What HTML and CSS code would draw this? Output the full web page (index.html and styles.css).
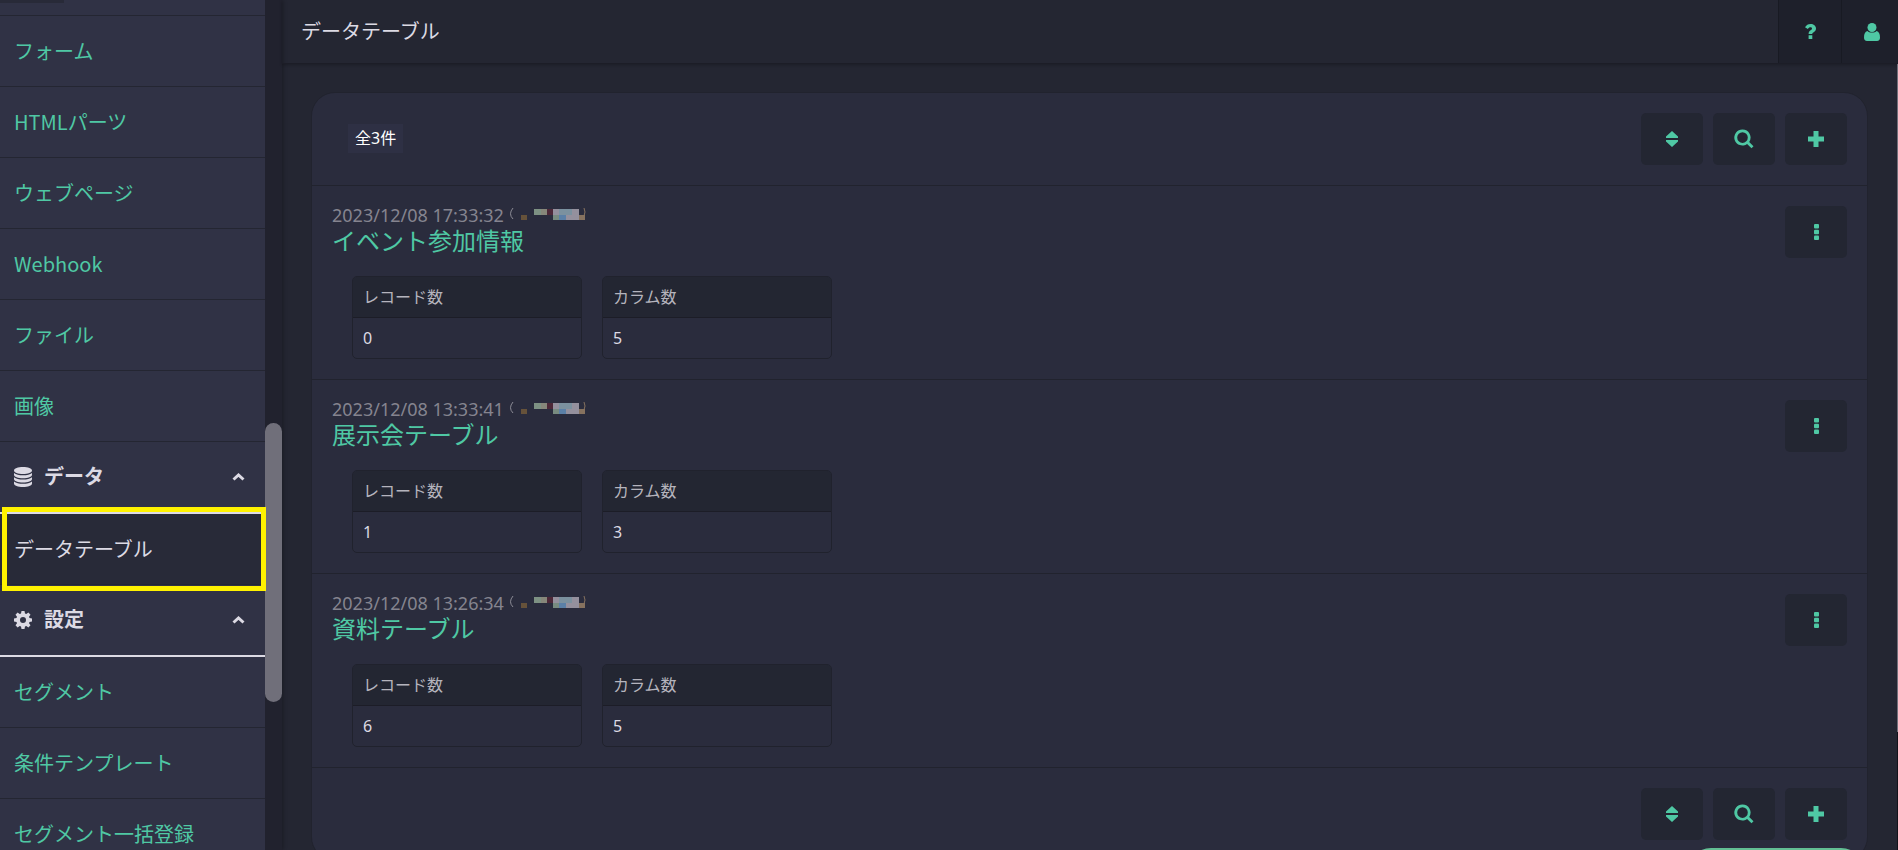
FILE: index.html
```html
<!DOCTYPE html>
<html lang="ja">
<head>
  <meta charset="UTF-8">
  <title>データテーブル</title>
  <link rel="stylesheet" href="styles.css">
</head>
<body>
  <svg class="sprite" aria-hidden="true">
    <symbol id="i-sort" viewBox="0 0 12 16"><path d="M6 0L12 5.500V7H0V5.500zM0 9H12V10.500L6 16L0 10.500z"/></symbol>
    <symbol id="i-search" viewBox="0 0 20 20"><path fill-rule="evenodd" d="M8.500 0.500a8 8 0 0 1 6.700 12.400l4.300 4.300-2 2-4.400-4.300A8 8 0 1 1 8.500 0.500zM8.500 3.300a5.300 5.300 0 1 0 0 10.600 5.300 5.300 0 0 0 0-10.600z"/></symbol>
    <symbol id="i-plus" viewBox="0 0 16 16"><path d="M5.500 0h5v5.500H16v5h-5.500V16h-5v-5.500H0v-5h5.500z"/></symbol>
    <symbol id="i-dots" viewBox="0 0 5 16"><rect width="5" height="4.500" rx="1"/><rect y="5.800" width="5" height="4.400" rx="1"/><rect y="11.500" width="5" height="4.500" rx="1"/></symbol>
    <symbol id="i-up" viewBox="0 0 13 8"><path d="M1.500 6.500L6.500 2L11.500 6.500" fill="none" stroke="currentColor" stroke-width="3"/></symbol>
    <symbol id="i-mask" viewBox="0 0 78 16">
      <path d="M5 2q-5 6 0 11" fill="none" stroke="#8b8b95"/>
      <path fill="#66523a" d="M13 9h6v5h-6z"/>
      <path fill="#7d9183" d="M26 3h7v6h-7z"/>
      <path fill="#86877a" d="M33 3h6v6h-6z"/>
      <path fill="#4c2838" d="M39 3h6v6h-6z"/>
      <path fill="#94909d" d="M45 3h26v11h-26z"/>
      <path fill="#7b919f" d="M51 3h13v6h-13z"/>
      <path fill="#788b80" d="M45 9h6v5h-6z"/>
      <path fill="#5b80a7" d="M51 9h7v5h-7z"/>
      <path fill="#86725f" d="M71 9h6v5h-6z"/>
      <path d="M76 2q2 4 0 8" fill="none" stroke="#86725f"/>
    </symbol>
  </svg>

  <aside class="sidebar">
    <nav class="menu">
      <div class="menu-cut"><span></span></div>
      <a class="menu-item" href="#">フォーム</a>
      <a class="menu-item" href="#">HTMLパーツ</a>
      <a class="menu-item" href="#">ウェブページ</a>
      <a class="menu-item" href="#">Webhook</a>
      <a class="menu-item" href="#">ファイル</a>
      <a class="menu-item" href="#">画像</a>
      <button class="menu-head" type="button">
        <svg class="head-icon" viewBox="0 0 18 20"><path d="M0 3.500C0 1.500 4 0 9 0s9 1.500 9 3.500S14 7 9 7 0 5.500 0 3.500zM0 6c2 1.600 5 2.300 9 2.300S16 7.600 18 6v1.800c0 2-4 3.500-9 3.500S0 9.800 0 7.800zM0 10.300c2 1.600 5 2.300 9 2.300s7-.7 9-2.300V12c0 2-4 3.500-9 3.500S0 14 0 12zM0 14.500c2 1.600 5 2.300 9 2.300s7-.7 9-2.300v2C18 18.500 14 20 9 20s-9-1.500-9-3.500z"/></svg>
        <span>データ</span>
        <svg class="arrow"><use href="#i-up"/></svg>
      </button>
      <div class="marked"><a class="menu-item active" href="#">データテーブル</a></div>
      <button class="menu-head" type="button">
        <svg class="head-icon" viewBox="0 0 18 20"><path fill-rule="evenodd" d="M7.500 1h3l.5 2.600 1.300.5 2.100-1.500 2.100 2.100L15 6.800l.5 1.300 2.500.4v3l-2.500.4-.5 1.300 1.500 2.100-2.100 2.100-2.100-1.500-1.300.5-.5 2.600h-3L7 16.400l-1.300-.5-2.100 1.500-2.100-2.100L3 13.200l-.5-1.300L0 11.500v-3l2.500-.4L3 6.800 1.500 4.700l2.100-2.100 2.100 1.500L7 3.600zM9 7a3 3 0 1 0 0 6 3 3 0 0 0 0-6z"/></svg>
        <span>設定</span>
        <svg class="arrow"><use href="#i-up"/></svg>
      </button>
      <a class="menu-item" href="#">セグメント</a>
      <a class="menu-item" href="#">条件テンプレート</a>
      <a class="menu-item" href="#">セグメント一括登録</a>
    </nav>
    <div class="track"><div class="thumb"></div></div>
  </aside>

  <div class="page">
    <header class="topbar">
      <h1>データテーブル</h1>
      <button class="top-btn" type="button" aria-label="ヘルプ"><svg width="11" height="15" viewBox="0 0 11 15"><path d="M0 3.300C1.300 1.200 3 0 5.600 0 8.600 0 11 1.900 11 4.500c0 2-1 2.900-2.300 3.700C7.500 8.900 7.300 9.200 7.300 10H3.600c0-2 .6-2.900 2-3.700C6.700 5.700 7 5.300 7 4.600c0-.8-.7-1.300-1.600-1.300-1.100 0-1.700.5-2.600 1.700zM3.600 11.200h3.700V15H3.600z"/></svg></button>
      <button class="top-btn" type="button" aria-label="アカウント"><svg width="16" height="18" viewBox="0 0 16 18"><circle cx="8" cy="4.500" r="4.500"/><path d="M3.500 8C5 10 11 10 12.500 8 15 8.500 16 11 16 14.500c0 2-1 3.500-3 3.500H3c-2 0-3-1.500-3-3.500C0 11 1 8.500 3.500 8z"/></svg></button>
    </header>

    <div class="content">
      <main class="card">
        <div class="card-head">
          <span class="count">全3件</span>
          <div class="tools">
            <button class="btn" type="button" aria-label="並び替え"><svg width="12" height="16"><use href="#i-sort"/></svg></button>
            <button class="btn" type="button" aria-label="検索"><svg width="20" height="20"><use href="#i-search"/></svg></button>
            <button class="btn" type="button" aria-label="追加"><svg width="16" height="16"><use href="#i-plus"/></svg></button>
          </div>
        </div>

        <section class="record">
          <div class="info">
            <p class="date">2023/12/08 17:33:32<svg class="mask"><use href="#i-mask"/></svg></p>
            <h2><a href="#">イベント参加情報</a></h2>
            <div class="stats">
              <dl><dt>レコード数</dt><dd>0</dd></dl>
              <dl><dt>カラム数</dt><dd>5</dd></dl>
            </div>
          </div>
          <button class="btn" type="button" aria-label="メニュー"><svg width="5" height="16"><use href="#i-dots"/></svg></button>
        </section>

        <section class="record">
          <div class="info">
            <p class="date">2023/12/08 13:33:41<svg class="mask"><use href="#i-mask"/></svg></p>
            <h2><a href="#">展示会テーブル</a></h2>
            <div class="stats">
              <dl><dt>レコード数</dt><dd>1</dd></dl>
              <dl><dt>カラム数</dt><dd>3</dd></dl>
            </div>
          </div>
          <button class="btn" type="button" aria-label="メニュー"><svg width="5" height="16"><use href="#i-dots"/></svg></button>
        </section>

        <section class="record">
          <div class="info">
            <p class="date">2023/12/08 13:26:34<svg class="mask"><use href="#i-mask"/></svg></p>
            <h2><a href="#">資料テーブル</a></h2>
            <div class="stats">
              <dl><dt>レコード数</dt><dd>6</dd></dl>
              <dl><dt>カラム数</dt><dd>5</dd></dl>
            </div>
          </div>
          <button class="btn" type="button" aria-label="メニュー"><svg width="5" height="16"><use href="#i-dots"/></svg></button>
        </section>

        <div class="tools card-foot">
          <button class="btn" type="button" aria-label="並び替え"><svg width="12" height="16"><use href="#i-sort"/></svg></button>
          <button class="btn" type="button" aria-label="検索"><svg width="20" height="20"><use href="#i-search"/></svg></button>
          <button class="btn" type="button" aria-label="追加"><svg width="16" height="16"><use href="#i-plus"/></svg></button>
        </div>
      </main>
      <div class="page-track"><div class="page-thumb"></div></div>
    </div>
  </div>
  <button class="float-btn" type="button" aria-label="サポート"></button>
</body>
</html>
```
FILE: styles.css
```css
* { box-sizing: border-box; }
body { margin: 0; height: 100vh; display: flex; overflow: hidden; background: #242632; color: #dcdae4; font-family: "Noto Sans", "Noto Sans CJK JP", sans-serif; font-size: 16px; }
h1, h2, p, dl, dd { margin: 0; font-weight: 400; }
a { color: #4fc8a4; text-decoration: none; }
button { font: inherit; border: none; padding: 0; color: inherit; cursor: pointer; }
svg { display: block; fill: currentColor; }
.sprite { position: absolute; width: 0; height: 0; }

/* サイドバー */
.sidebar { display: flex; flex: none; width: 282px; box-shadow: 1px 0 4px rgba(0,0,0,0.3); }
.menu { flex: 1; background: #303245; }
.menu-cut { height: 16px; border-bottom: 1px solid #242632; }
.menu-cut span { display: block; width: 64px; height: 3px; background: #282a38; }
.menu-item { display: flex; align-items: center; height: 71px; padding: 0 14px 2px; border-bottom: 1px solid #242632; font-family: "Noto Sans CJK JP", sans-serif; font-size: 20px; }
.menu-item.active { background: #282a38; color: #dcdae4; }
.menu-head { display: flex; align-items: center; width: 100%; height: 72px; padding: 0 20px 0 14px; background: none; border-bottom: 2px solid #dcdae4; color: #dcdae4; font-size: 20px; line-height: 26px; font-weight: 700; }
.head-icon { width: 18px; height: 20px; margin-right: 12px; }
.arrow { width: 13px; height: 8px; margin-left: auto; }
.marked { position: relative; }
.marked::after { content: ""; position: absolute; top: -7px; right: -1px; bottom: -6px; left: 2px; border: 5px solid #fff200; z-index: 2; }
.track { width: 17px; background: #21222e; padding-top: 423px; }
.thumb { height: 279px; border-radius: 9px; background: #706f7a; }

/* ヘッダー */
.page { flex: 1; min-width: 0; display: flex; flex-direction: column; }
.topbar { display: flex; flex: none; height: 64px; padding-left: 19px; border-bottom: 1px solid #1c1d27; box-shadow: 0 1px 3px rgba(0,0,0,0.25); }
.topbar h1 { flex: 1; font-size: 20px; line-height: 63px; }
.top-btn { display: flex; align-items: center; justify-content: center; width: 63px; background: #1e202b; border-left: 1px solid #181a23; color: #4fc8a4; }
.top-btn:last-child { width: 57px; padding-left: 3px; }

/* 一覧 */
.content { flex: 1; display: flex; align-items: flex-start; min-height: 0; }
.card { flex: 1; margin: 28px 29px 0; border: 1px solid #21232e; border-radius: 24px; background: #2a2c3d; }
.card-head { display: flex; justify-content: space-between; padding: 20px 20px 20px 36px; }
.count { align-self: center; margin-bottom: 2px; padding: 0 7px; line-height: 29px; background: #2e3044; color: #fff; }
.tools { display: flex; gap: 10px; justify-content: flex-end; }
.btn { display: flex; align-items: center; justify-content: center; flex: none; width: 62px; height: 52px; border-radius: 5px; background: #232632; color: #4fc8a4; }
.record { display: flex; align-items: flex-start; padding: 20px; border-top: 1px solid #21232e; }
.info { flex: 1; }
.date { display: flex; height: 20px; font-size: 18px; line-height: 18px; color: #85848f; }
.mask { width: 78px; height: 16px; margin-left: 4px; }
.record h2 { font-size: 24px; line-height: 30px; }
.stats { display: flex; gap: 20px; padding: 20px 20px 0; }
.stats dl { width: 230px; border: 1px solid #20222d; border-radius: 5px; overflow: hidden; }
.stats dt, .stats dd { padding: 0 10px; line-height: 40px; }
.stats dt { background: #232632; border-bottom: 1px solid #1c1d27; color: #b5b4bd; }
.card-foot { padding: 20px; border-top: 1px solid #21232e; }

/* 右端のスクロールバー */
.page-track { align-self: stretch; width: 1px; background: #12131a; }
.page-thumb { height: 85%; background: #706f7a; }
.float-btn { position: fixed; right: 32px; bottom: -48px; width: 180px; height: 50px; border-radius: 25px; background: #63bf94; }
```
